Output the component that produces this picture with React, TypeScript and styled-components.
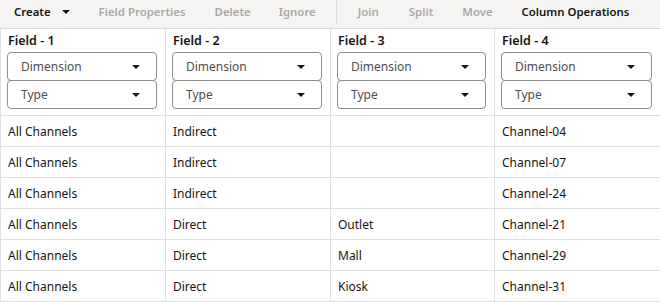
import React from "react";
import styled, { createGlobalStyle } from "styled-components";

const Global = createGlobalStyle`
  html, body { margin: 0; padding: 0; background: #ffffff; }
  body { font-family: "Noto Sans", "Open Sans", sans-serif; color: #161513; }
  * { box-sizing: border-box; }
`;

const Page = styled.div`
  width: 660px;
  height: 302px;
  overflow: hidden;
  background: #fff;
`;

const Toolbar = styled.div`
  height: 29px;
  display: flex;
  align-items: center;
  padding-left: 14px;
  background: #f5f4f2;
  border-bottom: 1px solid #dcdbd9;
  font-size: 11.4px;
  font-weight: 600;
`;

const ToolItem = styled.div<{ $disabled?: boolean; $ml?: number }>`
  margin-left: ${(p) => p.$ml ?? 0}px;
  color: ${(p) => (p.$disabled ? "#aaa9a7" : "#161513")};
  white-space: nowrap;
  display: flex;
  align-items: center;
  line-height: 16px;
  padding-bottom: 4px;
`;

const Caret = styled.svg<{ $ml?: number }>`
  margin-left: ${(p) => p.$ml ?? 0}px;
  display: block;
`;

const Divider = styled.div`
  width: 1px;
  height: 24px;
  background: #dedcd9;
  margin-left: 20px;
  align-self: flex-start;
`;

const Grid = styled.div`
  display: grid;
  grid-template-columns: 165px 165px 164px 166px;
  border-left: 1px solid #e0e0e0;
`;

const HeaderCell = styled.div`
  height: 87px;
  padding: 4px 8px 0 6px;
  border-right: 1px solid #e0e0e0;
  border-bottom: 1px solid #e0e0e0;
  display: flex;
  flex-direction: column;
`;

const FieldTitle = styled.div`
  font-size: 12.5px;
  font-weight: 600;
  line-height: 16px;
  height: 20px;
  margin-left: 1px;
`;

const Select = styled.div`
  height: 29px;
  margin-top: -1px;
  border: 1px solid #8f8e8c;
  border-radius: 4px;
  display: flex;
  align-items: center;
  justify-content: space-between;
  padding: 0 16px 0 13px;
  font-size: 12px;
  color: #4f4e4c;
  &:first-of-type { margin-top: 0; }
`;

const Cell = styled.div`
  height: 31px;
  padding: 0 0 0 7px;
  border-right: 1px solid #e0e0e0;
  border-bottom: 1px solid #e0e0e0;
  display: flex;
  align-items: center;
  font-size: 12px;
  color: #161513;
`;

const CaretIcon = ({ ml, w = 8 }: { ml?: number; w?: number }) => (
  <Caret $ml={ml} width={w} height={w / 2} viewBox="0 0 8 4">
    <path d="M0 0 H8 L4 4 Z" fill="#161513" />
  </Caret>
);

const fields = ["Field - 1", "Field - 2", "Field - 3", "Field - 4"];
const rows = [
  ["All Channels", "Indirect", "", "Channel-04"],
  ["All Channels", "Indirect", "", "Channel-07"],
  ["All Channels", "Indirect", "", "Channel-24"],
  ["All Channels", "Direct", "Outlet", "Channel-21"],
  ["All Channels", "Direct", "Mall", "Channel-29"],
  ["All Channels", "Direct", "Kiosk", "Channel-31"],
];

export default function App() {
  return (
    <Page>
      <Global />
      <Toolbar>
        <ToolItem>Create</ToolItem>
        <ToolItem $ml={11}>
          <CaretIcon />
        </ToolItem>
        <ToolItem $disabled $ml={29}>Field Properties</ToolItem>
        <ToolItem $disabled $ml={29}>Delete</ToolItem>
        <ToolItem $disabled $ml={28}>Ignore</ToolItem>
        <Divider />
        <ToolItem $disabled $ml={21}>Join</ToolItem>
        <ToolItem $disabled $ml={30}>Split</ToolItem>
        <ToolItem $disabled $ml={29}>Move</ToolItem>
        <ToolItem $ml={29}>Column Operations</ToolItem>
      </Toolbar>
      <Grid>
        {fields.map((f) => (
          <HeaderCell key={f}>
            <FieldTitle>{f}</FieldTitle>
            <Select>
              <span>Dimension</span>
              <CaretIcon />
            </Select>
            <Select>
              <span>Type</span>
              <CaretIcon />
            </Select>
          </HeaderCell>
        ))}
        {rows.map((r, i) =>
          r.map((c, j) => <Cell key={`${i}-${j}`}>{c}</Cell>)
        )}
      </Grid>
    </Page>
  );
}
